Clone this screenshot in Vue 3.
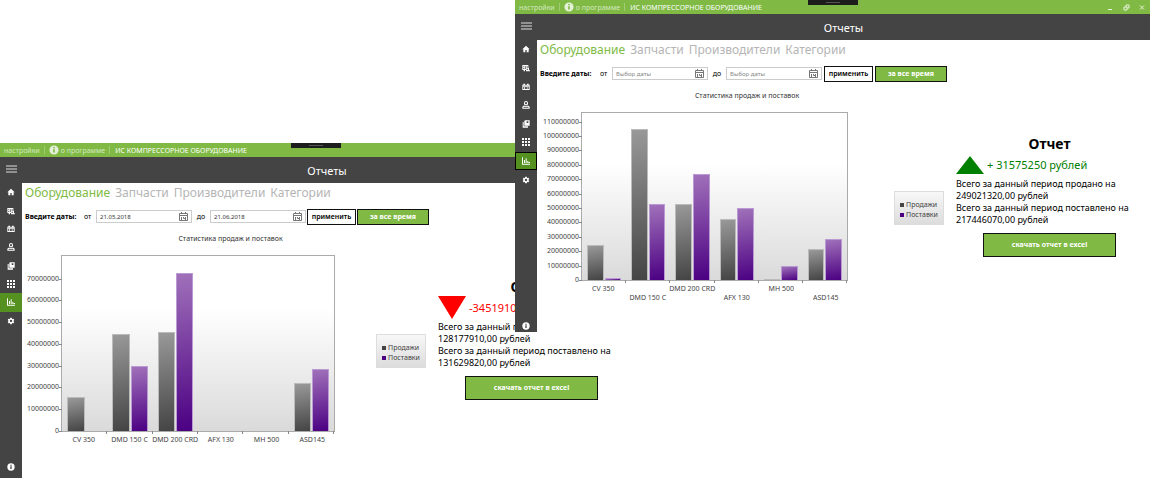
<script setup>
const tabs = ['Оборудование', 'Запчасти', 'Производители', 'Категории']
const categories = ['CV 350', 'DMD 150 C', 'DMD 200 CRD', 'AFX 130', 'MH 500', 'ASD145']

const windows = [
  {
    id: 'period',
    from: '21.05.2018',
    to: '21.06.2018',
    max: 80.4,
    ticks: 7,
    staggered: false,
    sales: [15.8, 44.4, 45.4, 0, 0, 21.9],
    supplies: [0, 30, 72.7, 0, 0, 28.7],
    profit: false,
    total: '-3451910 рублей',
    sold: '128177910,00 рублей',
    supplied: '131629820,00 рублей',
  },
  {
    id: 'overall',
    from: '',
    to: '',
    max: 116,
    ticks: 11,
    staggered: true,
    sales: [24, 105, 53, 42.5, 1, 21.5],
    supplies: [1.4, 53, 73.5, 49.7, 9.6, 28.7],
    profit: true,
    total: '+ 31575250 рублей',
    sold: '249021320,00 рублей',
    supplied: '217446070,00 рублей',
  },
]

const menu = [
  { name: 'Главная', d: 'M10 22v-7h4v7h6v-9h3L12 2 1 13h3v9z' },
  { name: 'Поставки', d: 'M1 3h18v8h2v8h3v3H12v-4H9v4H5v-4H1zM4 7v3h3V7zM4 12v3h3v-3zM9 7v8h2V7zM14 7v4h3V7zM14 14v3h4v-3z' },
  { name: 'Заказы', d: 'M1 5h3V2h5v3h6V2h5v3h3v16H1zM3 8v2h18V8zM3 12v6h18v-6zM5 13h4v4H5zM11 14h3v2h-3zM16 13h3v4h-3z' },
  { name: 'Клиенты', d: 'M12 0a6 6 0 0 1 6 6 6 6 0 0 1-6 7 6 6 0 0 1-6-7 6 6 0 0 1 6-6zM12 3a3 3 0 0 0-3 3c0 2 1 4 3 4s3-2 3-4a3 3 0 0 0-3-3zM1 23v-4c0-4 4-5 7-5l4 2 4-2c3 0 7 1 7 5v4zM4 20h16c0-2-3-3-5-3l-3 2-3-2c-2 0-5 1-5 3z' },
  { name: 'Каталог', d: 'M9 1h14v16H7V3zM2 6h3v13h13v4H2zM14 4v5h5V4z' },
  { name: 'Склад', d: 'M0 0h6v6H0zM9 0h6v6H9zM18 0h6v6h-6zM0 9h6v6H0zM9 9h6v6H9zM18 9h6v6h-6zM0 18h6v6H0zM9 18h6v6H9zM18 18h6v6h-6z' },
  { name: 'Отчеты', d: 'M0 1h3v19h21v3H0zM6 9h3v9H6zM11 4h3v14h-3zM16 12h3v6h-3zM20 15h4v3h-4z', active: true },
  { name: 'Настройки', d: 'M19.4 13c0-.3.1-.6.1-1s0-.7-.1-1l2.1-1.6c.2-.2.3-.4.1-.7l-2-3.4c-.1-.3-.4-.3-.6-.3l-2.5 1c-.5-.4-1.1-.7-1.7-1l-.4-2.6c0-.3-.2-.5-.5-.5h-4c-.2 0-.4.2-.5.5l-.4 2.6c-.6.3-1.1.6-1.7 1l-2.5-1c-.2-.1-.5 0-.6.2l-2 3.5c-.1.2-.1.5.1.6L4.500 11c0 .3-.1.6-.1 1s0 .7.1 1l-2.1 1.600c-.2.2-.3.5-.1.7l2 3.400c.1.3.4.3.6.3l2.500-1c.5.4 1.100.7 1.700 1l.4 2.600c0 .3.2.5.5.5h4c.3 0 .5-.2.5-.5l.4-2.600c.6-.3 1.200-.6 1.700-1l2.500 1c.2.1.5 0 .6-.2l2-3.500c.1-.2.1-.5-.1-.6zM12 15.500A3.500 3.500 0 1 1 12 8.500a3.500 3.500 0 0 1 0 7z' },
]

const info = 'M12 1a11 11 0 1 0 0 22 11 11 0 0 0 0-22zM10 10h4v8h-4zM10 5h4v3h-4z'
const calendar = 'M.5 1.5h8v7h-8zM.5 3.5h8M2.5 0v2M6.5 0v2M2.5 5v3M4.500 5v1.500h2M6.500 5v3'
const percent = (value, max) => `${(value / max) * 100}%`
</script>

<template>
  <main class="desktop">
    <section v-for="w in windows" :key="w.id" class="window" :class="w.id">
      <header class="titlebar">
        <a href="#">настройки</a>
        <i class="divider"></i>
        <a href="#" class="about">
          <svg class="info" viewBox="0 0 24 24"><path :d="info" fill-rule="evenodd" /></svg>
          о программе
        </a>
        <i class="divider"></i>
        <span class="app-name">ИС КОМПРЕССОРНОЕ ОБОРУДОВАНИЕ</span>
        <span class="grip"></span>
        <div class="controls">
          <button type="button" aria-label="Свернуть">
            <svg viewBox="0 0 8 8"><path d="M2 6.5h4" /></svg>
          </button>
          <button type="button" aria-label="Восстановить">
            <svg viewBox="0 0 8 8"><path d="M2 4h3v3H2zM4 4V2h3v3H5" /></svg>
          </button>
          <button type="button" aria-label="Закрыть">
            <svg viewBox="0 0 8 8"><path d="M2 2.500l4 4M6 2.500l-4 4" /></svg>
          </button>
        </div>
      </header>

      <aside class="sidebar">
        <button type="button" class="burger" aria-label="Меню">
          <svg viewBox="0 0 11 8"><path d="M0 1h11M0 4h11M0 7h11" /></svg>
        </button>
        <nav class="menu">
          <a v-for="m in menu" :key="m.name" href="#" :aria-label="m.name" :class="{ active: m.active }">
            <svg viewBox="0 0 24 24"><path :d="m.d" fill-rule="evenodd" /></svg>
          </a>
        </nav>
        <a href="#" class="help" aria-label="Справка">
          <svg viewBox="0 0 24 24"><path :d="info" fill-rule="evenodd" /></svg>
        </a>
      </aside>

      <h1 class="heading">Отчеты</h1>

      <div class="body">
        <nav class="tabs">
          <a v-for="(t, i) in tabs" :key="t" href="#" :class="{ current: i === 0 }">{{ t }}</a>
        </nav>

        <form class="filters" @submit.prevent>
          <b>Введите даты:</b>
          <label :for="w.id + '-from'" class="from">от</label>
          <span class="date">
            <input :id="w.id + '-from'" type="text" :value="w.from" placeholder="Выбор даты" />
            <button type="button" aria-label="Календарь">
              <svg viewBox="0 0 9 9"><path :d="calendar" /></svg>
            </button>
          </span>
          <label :for="w.id + '-to'" class="to">до</label>
          <span class="date">
            <input :id="w.id + '-to'" type="text" :value="w.to" placeholder="Выбор даты" />
            <button type="button" aria-label="Календарь">
              <svg viewBox="0 0 9 9"><path :d="calendar" /></svg>
            </button>
          </span>
          <button type="submit" class="apply">применить</button>
          <button type="button" class="green all-time">за все время</button>
        </form>

        <div class="content">
          <figure class="chart">
            <figcaption>Статистика продаж и поставок</figcaption>
            <div class="chart-row">
              <div class="graph">
                <div class="plot">
                  <span
                    v-for="n in w.ticks + 1"
                    :key="n"
                    class="tick"
                    :style="{ bottom: percent((n - 1) * 10, w.max) }"
                  >{{ (n - 1) * 10000000 }}</span>
                  <div v-for="(c, i) in categories" :key="c" class="group">
                    <i class="bar sales" :class="{ empty: !w.sales[i] }" :style="{ height: percent(w.sales[i], w.max) }"></i>
                    <i class="bar supplies" :class="{ empty: !w.supplies[i] }" :style="{ height: percent(w.supplies[i], w.max) }"></i>
                  </div>
                </div>
                <div class="names" :class="{ staggered: w.staggered }">
                  <span v-for="c in categories" :key="c">{{ c }}</span>
                </div>
              </div>
              <ul class="legend">
                <li>Продажи</li>
                <li class="purple">Поставки</li>
              </ul>
            </div>
          </figure>

          <section class="report">
            <h2>Отчет</h2>
            <div class="total" :class="{ profit: w.profit }">
              <svg v-if="w.profit" viewBox="0 0 28 18" width="28" height="18"><path d="M14 0L28 18H0z" /></svg>
              <svg v-else viewBox="0 0 28 23" width="28" height="23"><path d="M0 0H28L14 23z" /></svg>
              <span>{{ w.total }}</span>
            </div>
            <p>Всего за данный период продано на<br />{{ w.sold }}</p>
            <p>Всего за данный период поставлено на<br />{{ w.supplied }}</p>
            <button type="button" class="green download">скачать отчет в excel</button>
          </section>
        </div>
      </div>
    </section>
  </main>
</template>

<style>
body {
  margin: 0;
  background: #fff;
}
</style>

<style scoped>
* {
  box-sizing: border-box;
}
.desktop {
  position: relative;
  min-height: 100vh;
  overflow: hidden;
  font-family: 'Noto Sans', 'Open Sans', sans-serif;
  color: #000;
}
a {
  color: inherit;
  text-decoration: none;
}
button {
  font: inherit;
  padding: 0;
  border: 0;
  background: none;
  color: inherit;
}
.window {
  position: absolute;
  display: grid;
  grid-template-columns: 22px 1fr;
  grid-template-rows: 14px 26px 1fr;
  background: #fff;
}
.period {
  top: 143px;
  left: 0;
  right: 518px;
  bottom: 0;
}
.overall {
  top: 0;
  left: 515px;
  right: 0;
}
.titlebar {
  position: relative;
  grid-column: 1 / -1;
  display: flex;
  align-items: center;
  padding-left: 4px;
  background: #80ba45;
  color: #d3e8bf;
  font-size: 7px;
  white-space: nowrap;
}
.divider {
  width: 1px;
  height: 8px;
  margin: 0 4px;
  background: #a0cc75;
}
.about {
  display: flex;
  align-items: center;
  gap: 2px;
}
.info {
  width: 10px;
  height: 10px;
  fill: #e4f1d8;
}
.app-name {
  padding-left: 1px;
  color: #fff;
}
.grip {
  position: absolute;
  top: 0;
  left: 50%;
  width: 50px;
  height: 5px;
  margin-left: -25px;
  background: #1d1d1d;
}
.grip::after {
  content: '';
  position: absolute;
  top: 2px;
  left: 18px;
  width: 14px;
  height: 1px;
  background: #555;
}
.controls {
  display: flex;
  gap: 8px;
  margin-left: auto;
  padding-right: 4px;
}
.controls button {
  width: 8px;
  height: 8px;
}
.controls svg {
  display: block;
  fill: none;
  stroke: #e8f3dd;
  stroke-width: 1;
}
.sidebar {
  grid-row: 2 / 4;
  display: flex;
  flex-direction: column;
  align-items: center;
  background: #444;
}
.burger {
  flex: none;
  width: 22px;
  height: 26px;
}
.burger svg {
  display: block;
  width: 11px;
  height: 8px;
  margin: -3px auto 0;
  stroke: #ddd;
  stroke-width: 1;
}
.menu {
  display: grid;
  grid-auto-rows: 1fr;
  width: 22px;
  height: 149px;
}
.period .menu {
  height: 147px;
}
.menu a {
  display: grid;
  place-items: center;
}
.menu svg,
.help svg {
  display: block;
  width: 8px;
  height: 8px;
  fill: #fff;
}
.menu .active {
  background: #549120;
}
.overall .active {
  border: 1px solid #000;
}
.help {
  margin-top: auto;
  padding-bottom: 2px;
}
.period .help {
  padding-bottom: 7px;
}
.heading {
  display: grid;
  place-items: center;
  margin: 0;
  background: #444;
  color: #fff;
  font-size: 11px;
  font-weight: 400;
}
.body {
  display: flex;
  flex-direction: column;
  padding: 0 0 29px 3px;
}
.tabs {
  display: flex;
  gap: 5px;
  height: 20px;
  line-height: 20px;
  font-size: 12px;
  color: #b5b5b5;
}
.tabs .current {
  color: #80ba45;
}
.filters {
  display: flex;
  align-items: center;
  height: 17px;
  margin-top: 5px;
  font-size: 7px;
  white-space: nowrap;
}
.filters b {
  width: 60px;
}
.period .filters b {
  width: 59px;
}
.from {
  width: 12px;
}
.to {
  width: 18px;
  text-align: center;
}
.date {
  display: flex;
  align-items: center;
  width: 96px;
  height: 13px;
  border: 1px solid #ccc;
}
.date input {
  flex: 1;
  min-width: 0;
  height: 11px;
  padding: 0 0 0 3px;
  border: 0;
  background: none;
  font: inherit;
  font-size: 6px;
  color: #333;
}
.date input::placeholder {
  color: #888;
}
.date button {
  width: 12px;
}
.date svg {
  display: block;
  width: 9px;
  height: 9px;
  fill: none;
  stroke: #777;
  stroke-width: 1;
}
.green {
  border: 1px solid #111;
  background: #80ba45;
  color: #fff;
  font-weight: 700;
  font-size: 7px;
}
.apply {
  width: 49px;
  height: 16px;
  margin-left: 2px;
  border: 1px solid #111;
  background: #fff;
  font-weight: 600;
}
.all-time {
  width: 72px;
  height: 16px;
  margin-left: 2px;
}
.period .apply,
.period .all-time {
  margin-left: 1px;
}
.content {
  display: grid;
  grid-template-columns: 1fr 196px;
  align-items: center;
  height: 215px;
  margin-top: 6px;
}
.chart {
  display: flex;
  flex-direction: column;
  height: 215px;
  margin: 0;
  padding-right: 10px;
}
.chart figcaption {
  height: 24px;
  padding-left: 10px;
  line-height: 16px;
  text-align: center;
  font-size: 7px;
  color: #333;
}
.chart-row {
  flex: 1;
  display: flex;
  align-items: center;
}
.graph {
  flex: 1;
  display: flex;
  flex-direction: column;
  align-self: stretch;
  padding-left: 36px;
}
.overall .graph {
  padding-left: 41px;
}
.plot {
  position: relative;
  flex: 1;
  display: flex;
  border: 1px solid #aaa;
  background: linear-gradient(#fff 30%, #dadada);
}
.tick {
  position: absolute;
  right: 100%;
  height: 10px;
  margin-bottom: -5px;
  padding-right: 3px;
  line-height: 10px;
  font-size: 7px;
  color: #444;
}
.tick::after {
  content: '';
  position: absolute;
  right: 0;
  top: 5px;
  width: 3px;
  height: 1px;
  background: #888;
}
.group {
  position: relative;
  flex: 1;
  display: flex;
  align-items: flex-end;
  gap: 1px;
  padding: 0 5px;
}
.group::after {
  content: '';
  position: absolute;
  right: 0;
  top: 100%;
  width: 1px;
  height: 3px;
  background: #888;
}
.bar {
  flex: 1;
  border: 1px solid #bbb;
  border-bottom: 0;
}
.bar.sales {
  background: linear-gradient(170deg, #999, #444);
}
.bar.supplies {
  border-color: #b99ad2;
  background: linear-gradient(170deg, #a071ba, #4b0082);
}
.bar.empty {
  border: 0;
}
.names {
  display: flex;
  height: 14px;
  font-size: 7px;
  line-height: 15px;
  color: #444;
}
.names span {
  flex: 1;
  display: flex;
  justify-content: center;
  width: 0;
  white-space: nowrap;
}
.names.staggered {
  height: 22px;
}
.staggered span:nth-child(even) {
  padding-top: 9px;
}
.legend {
  width: 50px;
  height: 34px;
  margin: 0 0 0 41px;
  padding: 8px 0 0 5px;
  border: 1px solid #ddd;
  background: linear-gradient(#f8f8f8, #dcdcdc);
  list-style: none;
  font-size: 7px;
  line-height: 10px;
  color: #444;
}
.overall .legend {
  margin-left: 46px;
}
.legend li {
  display: flex;
  align-items: center;
  gap: 2px;
}
.legend li::before {
  content: '';
  width: 4px;
  height: 4px;
  background: #444;
}
.legend .purple::before {
  background: #4b0082;
}
.report {
  padding: 0 7px 0 2px;
  font-size: 9px;
  white-space: nowrap;
}
.report h2 {
  margin: 0;
  line-height: 17px;
  text-align: center;
  font-size: 14px;
}
.total {
  display: flex;
  align-items: center;
  gap: 3px;
  height: 26px;
  font-size: 11px;
  color: #f00;
}
.total svg {
  fill: #f00;
}
.profit {
  color: #008000;
}
.profit svg {
  fill: #008000;
}
.report p {
  margin: 0;
  line-height: 12px;
}
.download {
  display: block;
  width: 133px;
  height: 24px;
  margin: 7px auto 0;
}
</style>
